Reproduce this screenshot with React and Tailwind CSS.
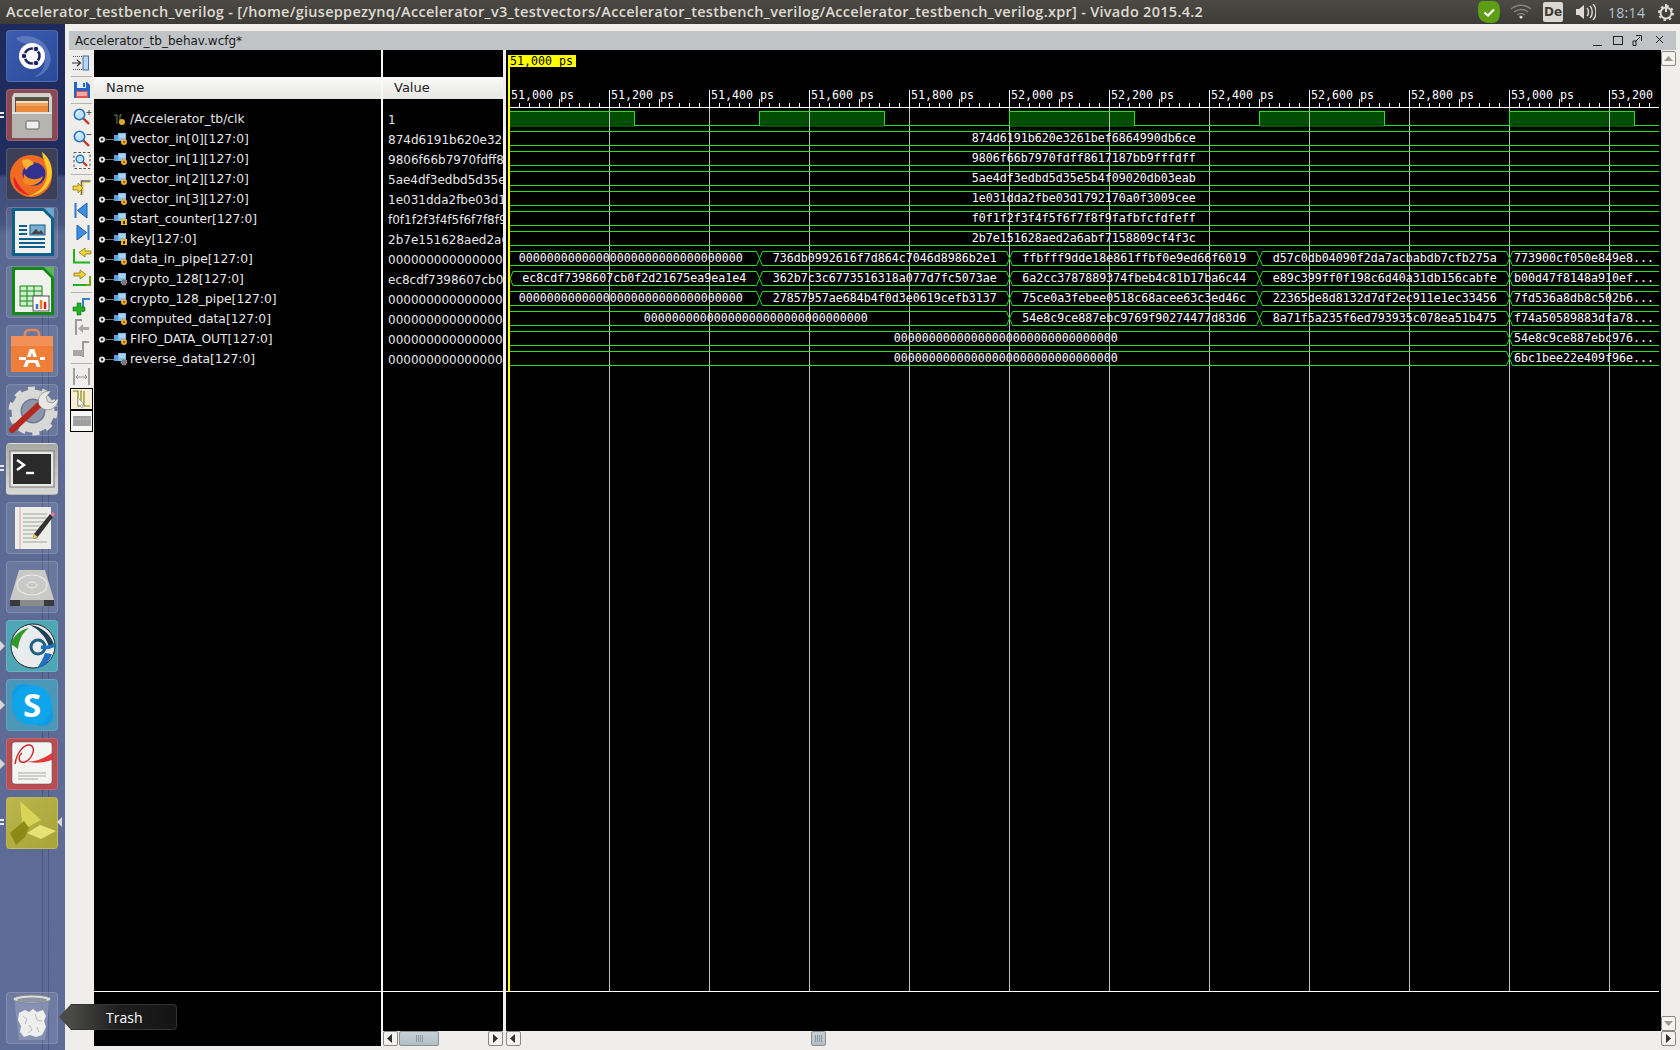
import React from "react";

const MONO = { fontFamily: '"DejaVu Sans Mono", monospace' };
const GREEN = "#22e222";
const ZERO = "00000000000000000000000000000000";
const VEC = [
  "874d6191b620e3261bef6864990db6ce",
  "9806f66b7970fdff8617187bb9fffdff",
  "5ae4df3edbd5d35e5b4f09020db03eab",
  "1e031dda2fbe03d1792170a0f3009cee",
  "f0f1f2f3f4f5f6f7f8f9fafbfcfdfeff",
  "2b7e151628aed2a6abf7158809cf4f3c",
];
const BUS = [
  { b: [759.5, 1009.5, 1259.5, 1509.5], t: [[518.7, ZERO], [772.7, "736db0992616f7d864c7046d8986b2e1"], [1022.3, "ffbfff9dde18e861ffbf0e9ed66f6019"], [1272.7, "d57c0db04090f2da7acbabdb7cfb275a"], [1514, "773900cf050e849e8..."]] },
  { open: true, b: [759.5, 1009.5, 1259.5, 1509.5], t: [[522.3, "ec8cdf7398607cb0f2d21675ea9ea1e4"], [772.7, "362b7c3c6773516318a077d7fc5073ae"], [1022.3, "6a2cc3787889374fbeb4c81b17ba6c44"], [1272.7, "e89c399ff0f198c6d40a31db156cabfe"], [1514, "b00d47f8148a910ef..."]] },
  { b: [759.5, 1009.5, 1259.5, 1509.5], t: [[518.7, ZERO], [772.7, "27857957ae684b4f0d3e0619cefb3137"], [1022.3, "75ce0a3febee0518c68acee63c3ed46c"], [1272.7, "22365de8d8132d7df2ec911e1ec33456"], [1514, "7fd536a8db8c502b6..."]] },
  { b: [1009.5, 1259.5, 1509.5], t: [[643.7, ZERO], [1022.3, "54e8c9ce887ebc9769f90274477d83d6"], [1272.7, "8a71f5a235f6ed793935c078ea51b475"], [1514, "f74a50589883dfa78..."]] },
  { b: [1509.5], t: [[893.7, ZERO], [1514, "54e8c9ce887ebc976..."]] },
  { b: [1509.5], t: [[893.7, ZERO], [1514, "6bc1bee22e409f96e..."]] },
];
const SIGNALS = [
  ["vector_in[0][127:0]", "o", VEC[0]],
  ["vector_in[1][127:0]", "o", VEC[1]],
  ["vector_in[2][127:0]", "o", VEC[2]],
  ["vector_in[3][127:0]", "o", VEC[3]],
  ["start_counter[127:0]", "y", VEC[4]],
  ["key[127:0]", "y", VEC[5]],
  ["data_in_pipe[127:0]", "o", ZERO],
  ["crypto_128[127:0]", "g", "ec8cdf7398607cb0f2d21675ea9ea1e4"],
  ["crypto_128_pipe[127:0]", "o", ZERO],
  ["computed_data[127:0]", "o", ZERO],
  ["FIFO_DATA_OUT[127:0]", "o", ZERO],
  ["reverse_data[127:0]", "g", ZERO],
];

function Wave() {
  const L = 510, R = 1659;
  const gridX = Array.from({ length: 12 }, (_, i) => 509.5 + i * 100);
  const ticks = [];
  for (let x = 509.5; x < R; x += 10) {
    const n = Math.round((x - 509.5) / 10);
    if (n % 10 === 0) continue;
    ticks.push(<line key={x} x1={x} x2={x} y1={n % 5 === 0 ? 99 : 103} y2={107} stroke="#fff" />);
  }
  const clkEdges = [510, 634.5, 759.5, 884.5, 1009.5, 1134.5, 1259.5, 1384.5, 1509.5, 1634.5, R];
  let clk = "M510 111.5";
  const hi = [];
  for (let i = 0; i < clkEdges.length - 1; i++) {
    const high = i % 2 === 0;
    const y = high ? 111.5 : 125.5;
    clk += ` L${clkEdges[i]} ${y} L${clkEdges[i + 1]} ${y}`;
    if (high) hi.push([clkEdges[i], clkEdges[i + 1]]);
  }
  return (
    <svg width="1155" height="981" viewBox="506 50 1155 981" className="block" style={MONO}>
      <rect x="506" y="50" width="1155" height="981" fill="#000" />
      {hi.map(([a, b]) => (
        <rect key={a} x={a} y="111" width={b - a} height="16" fill="#014d02" />
      ))}
      <g shapeRendering="crispEdges">
        {gridX.map((x) => (
          <g key={x}>
            <line x1={x} x2={x} y1="90" y2="107" stroke="#fff" />
            <line x1={x} x2={x} y1="107" y2="991" stroke="#bdbdbd" />
          </g>
        ))}
        {ticks}
        <line x1="509" x2={R} y1="107.5" y2="107.5" stroke="#fff" />
        <line x1="506" x2={R} y1="991.5" y2="991.5" stroke="#fff" />
        <path d={clk} fill="none" stroke={GREEN} />
        {VEC.map((_, i) => (
          <g key={i}>
            <line x1={L} x2={R} y1={131.5 + i * 20} y2={131.5 + i * 20} stroke={GREEN} />
            <line x1={L} x2={R} y1={145.5 + i * 20} y2={145.5 + i * 20} stroke={GREEN} />
          </g>
        ))}
      </g>
      {BUS.map((r, i) => {
        const t = 251.5 + i * 20, bt = t + 14, m = t + 7;
        const pts = [r.open ? 510 : null, ...r.b, null];
        const segs = [];
        for (let k = 0; k < pts.length - 1; k++) {
          const a = pts[k], b = pts[k + 1];
          let d = a == null ? `M${L} ${t}` : `M${a} ${m} L${a + 3} ${t}`;
          d += b == null ? ` L${R} ${t} M${R} ${bt}` : ` L${b - 3} ${t} L${b} ${m} L${b - 3} ${bt}`;
          d += a == null ? ` L${L} ${bt}` : ` L${a + 3} ${bt} L${a} ${m}`;
          segs.push(<path key={k} d={d} fill="none" stroke={GREEN} />);
        }
        return <g key={i}>{segs}</g>;
      })}
      <g fill="#fff" fontSize="11.63">
        {gridX.map((x, i) => {
          const v = 51000 + i * 200;
          const s = `${String(v).slice(0, 2)},${String(v).slice(2)}`;
          return (
            <text key={x} x={x + 1.5} y="99">
              {i === 11 ? "53,200" : `${s} ps`}
            </text>
          );
        })}
        {VEC.map((s, i) => (
          <text key={s} x="971.7" y={142 + i * 20}>{s}</text>
        ))}
        {BUS.map((r, i) =>
          r.t.map(([x, s]) => (
            <text key={x} x={x} y={262 + i * 20}>{s}</text>
          ))
        )}
      </g>
      <rect x="508" y="55" width="2" height="936" fill="#ffff00" />
      <rect x="508" y="55" width="68" height="12" fill="#ffff00" />
      <text x="510" y="65" fontSize="11.63" fill="#000">51,000 ps</text>
    </svg>
  );
}

function Glass({ sign }) {
  return (
    <svg width="20" height="20" viewBox="0 0 20 20">
      <line x1="11" y1="11" x2="17" y2="17" stroke="#c8361f" strokeWidth="2.4" />
      <circle cx="7.5" cy="7.5" r="5.2" fill="#bfe3fb" stroke="#2a75c9" strokeWidth="1.6" />
      <path d="M4.5 7 A3.2 3.2 0 0 1 7.5 4.2" stroke="#fff" fill="none" />
      {sign === "+" && <path d="M14.5 5.5h5M17 3v5" stroke="#555" />}
      {sign === "-" && <path d="M14.5 5.5h5" stroke="#555" />}
    </svg>
  );
}

const TOOLS = {
  enter: (
    <svg width="20" height="20" viewBox="0 0 20 20">
      <path d="M1 3.5h10M1 16.5h12" stroke="#555" strokeDasharray="1 1" />
      <path d="M0 10h8M5 7l3.5 3-3.5 3" stroke="#333" fill="none" strokeWidth="1.2" />
      <rect x="11" y="3" width="5.5" height="14" fill="#b9d4ee" stroke="#3a73b0" />
    </svg>
  ),
  save: (
    <svg width="18" height="18" viewBox="0 0 18 18">
      <path d="M1 1h13l3 3v13H1z" fill="#1f66c7" />
      <rect x="4" y="1" width="9" height="6" fill="#e8eef5" />
      <rect x="10" y="2" width="2" height="4" fill="#1f66c7" />
      <rect x="3" y="10" width="12" height="7" fill="#e4504a" />
      <path d="M4 12h10M4 14h10" stroke="#fff" />
    </svg>
  ),
  zin: <Glass sign="+" />,
  zout: <Glass sign="-" />,
  zfit: (
    <svg width="20" height="20" viewBox="0 0 20 20">
      <rect x="2" y="1.5" width="16" height="16" fill="none" stroke="#555" strokeDasharray="2.5 2" />
      <line x1="10" y1="10" x2="15" y2="15" stroke="#c8361f" strokeWidth="2.2" />
      <circle cx="8" cy="8" r="3.8" fill="#bfe3fb" stroke="#2a75c9" strokeWidth="1.4" />
    </svg>
  ),
  gofirst: (
    <svg width="20" height="20" viewBox="0 0 20 20">
      <path d="M9.500 17V3h9" fill="none" stroke="#6a6a50" strokeWidth="1.6" />
      <path d="M11 17V4.500h7" fill="none" stroke="#e6c83c" strokeWidth="1" />
      <path d="M1 8h5V5l5 5-5 5v-3H1z" fill="#f2d33e" stroke="#8f7b1d" strokeWidth=".8" />
    </svg>
  ),
  prev: (
    <svg width="20" height="20" viewBox="0 0 20 20">
      <rect x="2.5" y="2" width="2" height="15" fill="#2f7bd0" />
      <path d="M15 2v15L5.5 9.5z" fill="#3c8fe4" stroke="#1f5ea8" />
    </svg>
  ),
  next: (
    <svg width="20" height="20" viewBox="0 0 20 20">
      <rect x="15.5" y="2" width="2" height="15" fill="#2f7bd0" />
      <path d="M5 2v15l9.5-7.500z" fill="#3c8fe4" stroke="#1f5ea8" />
    </svg>
  ),
  gleft: (
    <svg width="20" height="20" viewBox="0 0 20 20">
      <path d="M2 3v13.500h16" fill="none" stroke="#1db31d" strokeWidth="2" />
      <path d="M19 5h-6V2L7 6.500 13 11V8h6z" fill="#f2d33e" stroke="#8f7b1d" strokeWidth=".8" />
    </svg>
  ),
  gright: (
    <svg width="20" height="20" viewBox="0 0 20 20">
      <path d="M18 8v9H3" fill="none" stroke="#7fa21a" strokeWidth="2" />
      <path d="M1 17h13" stroke="#1db31d" strokeWidth="2" />
      <path d="M2 5h6V2l6 4.500L8 11V8H2z" fill="#f2d33e" stroke="#8f7b1d" strokeWidth=".8" />
    </svg>
  ),
  addmark: (
    <svg width="20" height="20" viewBox="0 0 20 20">
      <path d="M11 16V3h7" fill="none" stroke="#3b80cc" strokeWidth="2" />
      <path d="M1 11h4V7h4v4h4v4H9v4H5v-4H1z" fill="#22b322" stroke="#127012" strokeWidth=".6" />
    </svg>
  ),
  back: (
    <svg width="20" height="20" viewBox="0 0 20 20">
      <path d="M4 17V2h6" fill="none" stroke="#9a9a9a" strokeWidth="2" />
      <path d="M17 9h-6V6l-5 4.500 5 4.500v-3h6z" fill="#a8a8a8" />
    </svg>
  ),
  fwd: (
    <svg width="20" height="20" viewBox="0 0 20 20">
      <path d="M11 17V2h6" fill="none" stroke="#9a9a9a" strokeWidth="2" />
      <rect x="1" y="10" width="10" height="6" fill="#a8a8a8" />
    </svg>
  ),
  swap: (
    <svg width="20" height="20" viewBox="0 0 20 20">
      <path d="M2 1v17M17 1v17" stroke="#a0a0a0" strokeWidth="2" />
      <path d="M4 10h11M6 8l-2 2 2 2M13 8l2 2-2 2" stroke="#909090" fill="none" />
    </svg>
  ),
  cursor: (
    <svg width="20" height="20" viewBox="0 0 20 20">
      <path d="M1 2h5v15h3V2h1M12 2v15h6" fill="none" stroke="#7d8a1f" strokeWidth="1.2" />
      <path d="M6 9l6 6-2.500.3 1.500 3-1.400.7-1.500-3L6 17z" fill="#fff" stroke="#888" strokeWidth=".6" />
    </svg>
  ),
  bar: (
    <svg width="18" height="10" viewBox="0 0 18 10">
      <rect width="18" height="10" fill="#a3a3a3" />
      <path d="M3 0v10M6 0v10M9 0v10M12 0v10M15 0v10" stroke="#9a9a9a" />
      <path d="M0 3h18" stroke="#b4b4b4" />
    </svg>
  ),
};

function Tool({ k, sel, bg, wide }) {
  return (
    <div className={`flex items-center justify-center w-[23px] shrink-0 ${wide ? "h-[22.5px]" : "h-[22px]"} ${sel ? "border border-black " + bg : ""}`}>
      {TOOLS[k]}
    </div>
  );
}
const Sep = () => <div className="h-px w-[21px] bg-[#b5b5b0] my-[2px] shrink-0" />;

function Toolbar() {
  return (
    <div className="w-[25px] flex flex-col items-center pt-[2px] shrink-0">
      <Tool k="enter" />
      <Sep />
      <Tool k="save" />
      <Sep />
      <Tool k="zin" />
      <Tool k="zout" />
      <Tool k="zfit" />
      <Sep />
      <Tool k="gofirst" wide />
      <Tool k="prev" wide />
      <Tool k="next" wide />
      <Tool k="gleft" wide />
      <Tool k="gright" wide />
      <Sep />
      <Tool k="addmark" />
      <Tool k="back" />
      <Tool k="fwd" />
      <Sep />
      <Tool k="swap" />
      <Tool k="cursor" sel bg="bg-[#fbeed6]" />
      <Tool k="bar" sel bg="bg-[#f6f6f4]" />
    </div>
  );
}

function TreeIcon({ t }) {
  const lock =
    t === "y" ? (
      <g>
        <rect x="7" y="6" width="6" height="6" fill="#f1b91d" />
        <rect x="9" y="8" width="2" height="3" fill="#333" />
      </g>
    ) : t === "g" ? (
      <circle cx="10" cy="9" r="3" fill="#777" stroke="#ccc" strokeDasharray="1 1" />
    ) : (
      <g>
        <circle cx="10" cy="9" r="3" fill="#eda92b" />
        <circle cx="10" cy="9" r="1" fill="#7a5610" />
      </g>
    );
  return (
    <svg width="13" height="13" viewBox="0 0 13 13" className="shrink-0">
      <rect x="0" y="2" width="9" height="6" fill="#5a9fdc" />
      <rect x="4" y="0" width="8" height="8" fill="#7dbcef" />
      <path d="M5 2h6M5 4h6" stroke="#d5eafa" />
      {lock}
    </svg>
  );
}

function NameRow({ name, t }) {
  return (
    <div className="h-5 flex items-center text-[12.3px] text-[#e8e8e8]">
      <svg width="16" height="9" viewBox="0 0 16 9" className="ml-[4px] shrink-0">
        <circle cx="4" cy="4.5" r="2.2" fill="#222" stroke="#e6e6e6" strokeWidth="1.8" />
        <line x1="7" x2="16" y1="4.5" y2="4.5" stroke="#777" />
      </svg>
      <TreeIcon t={t} />
      <span className="ml-[3px] whitespace-nowrap">{name}</span>
    </div>
  );
}

function ColHead({ children, cls }) {
  return (
    <div className={`h-[22px] flex items-center text-[13px] text-[#222] bg-[linear-gradient(180deg,#fafaf9,#e6e6e3)] ${cls}`}>
      {children}
    </div>
  );
}

function Btn({ dir, cls = "" }) {
  const d = { l: "M9 3v9L4 7.5z", r: "M5 3v9l5-4.5z", u: "M3 10h9L7.5 5z", d: "M3 5h9l-4.5 5z" }[dir];
  const fill = dir === "u" || dir === "d" ? "#9a9a94" : "#333";
  return (
    <div className={`w-[15px] h-[15px] shrink-0 border border-[#8a8a84] rounded-[2px] bg-[#f4f3f0] flex items-center justify-center ${cls}`}>
      <svg width="15" height="15" viewBox="0 0 15 15" className="shrink-0"><path d={d} fill={fill} /></svg>
    </div>
  );
}

function Thumb({ cls }) {
  return (
    <div className={`h-[15px] border border-[#8a8f93] rounded-[2px] bg-[linear-gradient(180deg,#c7d0d6,#b2bec6)] flex items-center justify-center gap-px ${cls}`}>
      {[0, 1, 2, 3].map((i) => (
        <div key={i} className="w-px h-[7px] bg-[#8b979f]" />
      ))}
    </div>
  );
}

function Tile({ bg, children }) {
  return (
    <div className={`relative w-[52px] h-[52px] rounded-[4px] shrink-0 border border-white/15 ${bg}`}>
      <svg width="52" height="52" viewBox="0 0 52 52" className="absolute left-[-1px] top-[-1px]">
        {children}
      </svg>
    </div>
  );
}

const Launcher = [
  <Tile key="u" bg="bg-[linear-gradient(135deg,#3d5cae,#2a4a9a)]">
    <path d="M10 8c14-6 30 2 34 16 3 12-6 22-16 23 14-6 14-24 2-30C22 13 14 14 10 8z" fill="#7f97d0" opacity=".5" />
    <circle cx="26" cy="26" r="13" fill="#fff" />
    <circle cx="26" cy="26" r="7.5" fill="none" stroke="#1e2460" strokeWidth="2.6" />
    <circle cx="18" cy="26" r="2.8" fill="#1e2460" stroke="#fff" />
    <circle cx="30" cy="19" r="2.8" fill="#1e2460" stroke="#fff" />
    <circle cx="30" cy="33" r="2.8" fill="#1e2460" stroke="#fff" />
  </Tile>,
  <Tile key="f" bg="bg-[#8a4a55]">
    <path d="M8 4h36l2 4v41H6V8z" fill="#d2d1cc" />
    <rect x="9" y="8" width="34" height="15" fill="#55514d" />
    <rect x="10" y="12" width="32" height="2" fill="#f7dcb6" />
    <rect x="10" y="14" width="32" height="3" fill="#f0a55b" />
    <rect x="10" y="17" width="32" height="6" fill="#e8893c" />
    <path d="M6 23h40v26H6z" fill="#b5b4af" />
    <path d="M6 23h40v2H6z" fill="#e4e3de" />
    <rect x="20" y="32" width="13" height="8" rx="1" fill="#eee" stroke="#666" />
  </Tile>,
  <Tile key="ff" bg="bg-[#3b3f58]">
    <circle cx="25" cy="28" r="21" fill="#f06a21" />
    <path d="M36 4c12 9 13 26 4 36-6 6-12 8-18 8 10-3 19-10 19-22 0-8-4-14-5-22z" fill="#ffc72c" />
    <circle cx="28" cy="26" r="11.5" fill="#33308f" />
    <path d="M18 26c4 6 13 7 19 2-2 9-14 12-20 6z" fill="#f58a1f" />
    <path d="M16 12c6-2 10 0 12 4-3 1-6 3-8 6-2-3-4-6-4-10z" fill="#f9b233" />
    <path d="M8 28c-2 9 5 18 16 19-6-3-12-9-16-19z" fill="#e1262b" />
  </Tile>,
  <Tile key="w" bg="bg-white/10">
    <path d="M6 1h32l10 10v38H6z" fill="#0d5f8c" />
    <path d="M9 4h28l8 8v34H9z" fill="#f1f1ee" />
    <path d="M38 1h10v10z" fill="#6aa7cf" />
    <rect x="24" y="18" width="15" height="10" fill="#7aaed2" stroke="#0d5f8c" />
    <path d="M25 27l5-5 3 3 2-2 3 4z" fill="#444" />
    <path d="M13 19h8M13 23h8M13 27h8M13 32h26M13 36h26M13 40h26" stroke="#0d5f8c" strokeWidth="2" />
  </Tile>,
  <Tile key="c" bg="bg-white/10">
    <path d="M6 1h32l10 10v38H6z" fill="#138a13" />
    <path d="M9 4h28l8 8v34H9z" fill="#f1f1ee" />
    <path d="M38 1h10v10z" fill="#58b858" />
    <path d="M14 20h22v20H14zM14 25h22M14 30h22M14 35h22M21 20v20M28 20v20" fill="#cfeccf" stroke="#138a13" />
    <rect x="27" y="30" width="16" height="15" fill="#fafafa" stroke="#555" />
    <path d="M31 43v-5" stroke="#3a73d8" strokeWidth="2.5" />
    <path d="M35 43v-9" stroke="#e8821e" strokeWidth="2.5" />
    <path d="M39 43v-7" stroke="#d22" strokeWidth="2.5" />
  </Tile>,
  <Tile key="s" bg="bg-white/10">
    <path d="M19 13v-4a4 4 0 0 1 4-4h6a4 4 0 0 1 4 4v4" fill="none" stroke="#e48855" strokeWidth="2.5" />
    <path d="M5 11h42v36H5z" fill="#ee7e38" />
    <path d="M5 11h42v10H5z" fill="#f29058" />
    <text x="26" y="42" textAnchor="middle" fontSize="25" fontWeight="700" fill="#fff" style={{ fontFamily: '"Liberation Sans", sans-serif' }}>A</text>
    <rect x="13" y="32" width="26" height="3" fill="#fff" />
    <rect x="20" y="32" width="14" height="3" fill="#ee7e38" />
  </Tile>,
  <Tile key="st" bg="bg-white/10">
    <circle cx="27" cy="27" r="17" fill="none" stroke="#d8d8d6" strokeWidth="9" />
    <circle cx="27" cy="27" r="22" fill="none" stroke="#d8d8d6" strokeWidth="5" strokeDasharray="7 7" />
    <circle cx="27" cy="27" r="11" fill="#8f95a8" />
    <path d="M6 46L33 21" stroke="#b5281f" strokeWidth="6" strokeLinecap="round" />
    <path d="M33 21c-3-8 4-15 12-14l-5 6 2 5 5 1 5-5c1 8-7 14-15 11z" fill="#e7e7e5" stroke="#777" strokeWidth=".6" />
  </Tile>,
  <Tile key="t" bg="bg-[linear-gradient(180deg,#a8a8a4,#d8d8d4)]">
    <rect x="4" y="8" width="44" height="36" fill="#e8e8e4" stroke="#777" />
    <rect x="7" y="11" width="38" height="30" fill="#2b2b2b" />
    <path d="M11 17l7 5-7 5" fill="none" stroke="#fff" strokeWidth="2.4" />
    <path d="M20 30h8" stroke="#fff" strokeWidth="2.4" />
  </Tile>,
  <Tile key="e" bg="bg-white/10">
    <rect x="9" y="5" width="36" height="42" fill="#ededea" />
    <path d="M14 5v42" stroke="#e9a0a0" />
    <path d="M17 12h24M17 16h24M17 20h24M17 24h20M17 28h14M17 32h12M17 36h10M17 40h24" stroke="#9a9a9a" strokeWidth=".9" />
    <path d="M47 15L31 36l-4 1 1-5L44 12z" fill="#333" />
    <path d="M44 12l3 3 2-3-2-2z" fill="#e87ba0" />
    <path d="M27 37l1-5 4 3z" fill="#ecc94b" />
  </Tile>,
  <Tile key="d" bg="bg-white/10">
    <path d="M13 9h26l9 30v6H4v-6z" fill="#c9c9c7" />
    <ellipse cx="26" cy="24" rx="15" ry="10" fill="none" stroke="#eaeaea" strokeWidth="1.2" />
    <ellipse cx="26" cy="24" rx="5" ry="3" fill="none" stroke="#eee" />
    <path d="M4 39h44v6H4z" fill="#3a3a3a" />
    <path d="M14 39h24v6H14z" fill="#8a8a8a" />
  </Tile>,
  <Tile key="a" bg="bg-[#4fa6b5]">
    <circle cx="27" cy="26" r="22" fill="#e9eced" />
    <circle cx="27" cy="26" r="22" fill="none" stroke="#262626" strokeWidth="1" />
    <path d="M5 24c2-8 10-15 18-16-7 5-10 12-11 21z" fill="#2f9a2a" />
    <path d="M24 5c12 1 22 11 24 20l-5 2C40 16 32 9 24 5z" fill="#1f3f55" />
    <circle cx="32" cy="27" r="7" fill="none" stroke="#1c5f85" strokeWidth="3" />
    <path d="M49 25c-4 2-10 3-14 2" stroke="#1f6fc2" strokeWidth="3.5" fill="none" />
    <path d="M31 48c8-1 13-8 15-14l-7-1c-2 6-5 11-8 15z" fill="#1f6fc2" />
  </Tile>,
  <Tile key="sk" bg="bg-[#4b97b8]">
    <circle cx="17" cy="16" r="11" fill="#0e9ce6" />
    <circle cx="36" cy="36" r="11" fill="#0e9ce6" />
    <circle cx="26" cy="26" r="20" fill="#0fa5ea" />
    <text x="26" y="38" textAnchor="middle" fontSize="33" fontWeight="700" fill="#fff" style={{ fontFamily: '"Open Sans", sans-serif' }}>S</text>
  </Tile>,
  <Tile key="ev" bg="bg-[#b84d52]">
    <rect x="6" y="4" width="40" height="42" rx="3" fill="#f4f4f2" stroke="#555" strokeWidth=".5" />
    <path d="M9 26c2-12 9-20 15-19 7 2 2 14-5 17-6 2-8-5-3-9" fill="none" stroke="#cc2a2a" strokeWidth="1.5" />
    <path d="M17 22c8 4 20-1 29-7v7c-9 3-20 4-29 0z" fill="#e23a3a" />
    <path d="M12 35h28M12 38h28M12 41h20" stroke="#a8a8a8" />
  </Tile>,
  <Tile key="v" bg="bg-[linear-gradient(135deg,#bcb64c,#a8a438)]">
    <path d="M14 4l21 19-13 7-6-4z" fill="#d9d356" />
    <path d="M4 36l14-12 5 7-4 9-9 8z" fill="#8f8a16" />
    <path d="M21 36l13-8 16 6-15 8z" fill="#e7e372" />
  </Tile>,
];

function Trash() {
  return (
    <Tile bg="bg-white/10">
      <path d="M8 6h36l-5 42H13z" fill="#aab3cc" opacity=".4" />
      <ellipse cx="26" cy="7" rx="19" ry="4" fill="#dcdcdc" stroke="#888" />
      <ellipse cx="26" cy="8" rx="15" ry="2.5" fill="#8e94a6" />
      <path d="M13 21l6-3 4 2 4-3 4 3 6-2 3 6-2 5 2 6-4 8-6 2-6-2-6 2-4-5 1-6-3-6z" fill="#eee" />
      <path d="M17 24l4 3-2 5M29 22l2 6 5 1M23 33l3 5-4 3M31 35l2 5" stroke="#bbb" fill="none" />
    </Tile>
  );
}

const Pip = ({ y, two }) =>
  two ? (
    <div className="absolute left-0 w-[4px] flex flex-col gap-[2px]" style={{ top: y - 3 }}>
      <div className="h-[2px] bg-[#e8e8e8]" />
      <div className="h-[2px] bg-[#e8e8e8]" />
    </div>
  ) : (
    <div className="absolute left-0 w-0 h-0 border-y-[5px] border-y-transparent border-l-[5px] border-l-[#d8d8d8]" style={{ top: y - 5 }} />
  );

export default function App() {
  return (
    <div className="w-[1680px] h-[1050px] flex flex-col overflow-hidden bg-[#efeeea]" style={{ fontFamily: '"DejaVu Sans", sans-serif' }}>
      {/* Top panel */}
      <div className="h-6 shrink-0 flex items-center bg-[linear-gradient(180deg,#4b4a44,#3c3b37)] text-[#dfdbd2]" style={{ fontFamily: '"Open Sans", sans-serif' }}>
        <div className="pl-[6px] text-[14.5px] font-semibold whitespace-nowrap flex-1 tracking-[0.29px]">
          Accelerator_testbench_verilog - [/home/giuseppezynq/Accelerator_v3_testvectors/Accelerator_testbench_verilog/Accelerator_testbench_verilog.xpr] - Vivado 2015.4.2
        </div>
        <div className="flex items-center w-[205px] shrink-0 pl-[2px]">
          <svg width="24" height="24" viewBox="0 0 24 24" className="shrink-0">
            <path d="M5 1h11c5 0 7 4 7 10s-1 12-8 12C9 23 1 22 1 12 1 6 1 2 5 1z" fill="#5d9e14" />
            <path d="M7.5 12.5l3.5 3 6-6" fill="none" stroke="#fff" strokeWidth="2.2" />
          </svg>
          <svg width="22" height="16" viewBox="0 0 22 16" className="ml-[9px] shrink-0">
            <path d="M1 5c6-5 14-5 20 0M4 8c4-3.5 10-3.5 14 0M7 11c2.5-2 5.500-2 8 0" fill="none" stroke="#85847f" strokeWidth="1.5" />
            <path d="M9 13l2-1.500 2 1.500-2 2z" fill="#dfdbd2" />
          </svg>
          <div className="ml-[11px] w-[20px] h-[20px] rounded-[2px] bg-[#dcd8cf] text-[#3c3b37] text-[12px] font-semibold flex items-center justify-center" style={{ fontFamily: '"DejaVu Sans", sans-serif' }}>De</div>
          <svg width="21" height="16" viewBox="0 0 21 16" className="ml-[12px] shrink-0">
            <path d="M1 5h3l5-4v14l-5-4H1z" fill="#dfdbd2" />
            <path d="M12 4c2 2 2 6 0 8M15 2c3 3 3 9 0 12M18 0c4 4 4 12 0 16" fill="none" stroke="#dfdbd2" strokeWidth="1.400" />
          </svg>
          <span className="ml-[12px] text-[14px] text-[#b7c4d0] tracking-[0.3px]">18:14</span>
          <svg width="18" height="18" viewBox="0 0 18 18" className="ml-[12px] shrink-0">
            <circle cx="9" cy="10" r="5.500" fill="none" stroke="#dfdbd2" strokeWidth="2" />
            <circle cx="9" cy="10" r="7" fill="none" stroke="#dfdbd2" strokeWidth="2" strokeDasharray="2.500 3" />
            <path d="M9 1v8" stroke="#dfdbd2" strokeWidth="2" />
          </svg>
        </div>
      </div>

      <div className="flex-1 flex min-h-0">
        {/* Launcher */}
        <div className="relative w-[65px] shrink-0 flex flex-col items-start pl-[6px] pt-[6px] pb-[6px] gap-[7px] bg-[linear-gradient(180deg,#1c2a5c_0,#1f2d60_150px,#3f4d7c_153px,#46547f_200px,#5a6891_210px,#5e6c98_100%)]">
          <div className="absolute left-[42px] top-[245px] bottom-0 w-px bg-[#4a5883]" />
          <div className="absolute left-[48px] top-[245px] bottom-0 w-px bg-[#4a5883]" />
          <div className="flex flex-col gap-[7px] items-center">{Launcher}</div>
          <div className="mt-auto"><Trash /></div>
          <Pip y={91} two />
          <Pip y={444} two />
          <Pip y={622} />
          <Pip y={681} />
          <Pip y={740} />
          <Pip y={798} two />
          <div className="absolute right-[3px] top-[793px] w-0 h-0 border-y-[5px] border-y-transparent border-r-[5px] border-r-[#d8d8d8]" />
          <div className="absolute left-[59px] top-[980px] h-[26px] w-[118px] flex items-center z-10">
            <div className="w-0 h-0 border-y-[13px] border-y-transparent border-r-[12px] border-r-[#4a4a47]" />
            <div className="flex-1 h-[26px] rounded-r-[4px] border border-l-0 border-[#333] bg-[linear-gradient(90deg,#4a4a47,#1e1e1e_45%,#141414)] flex items-center pl-[35px] text-[14px] text-white" style={{ fontFamily: '"Open Sans", sans-serif' }}>Trash</div>
          </div>
        </div>

        {/* Window */}
        <div className="flex-1 min-w-0 flex flex-col pt-[7px] pl-[4px] pr-[4px] pb-[4px]">
          <div className="h-[19px] shrink-0 bg-[#c0c4c6] flex items-center text-[12px] text-[#1a1a1a] pl-[6px] pr-[10px]">
            <span className="flex-1">Accelerator_tb_behav.wcfg*</span>
            <svg width="80" height="16" viewBox="0 0 80 16" className="shrink-0">
              <path d="M7 12.500h9" stroke="#222" />
              <rect x="27.500" y="3.500" width="9" height="8" fill="none" stroke="#222" />
              <path d="M50 2.500h5.500V8M50 12.500h-3V8h3z M49 9l5-5" fill="none" stroke="#222" />
              <path d="M70 3l7 7M77 3l-7 7" stroke="#222" />
            </svg>
          </div>
          <div className="flex-1 min-h-0 flex">
            <Toolbar />
            {/* Name column */}
            <div className="w-[287px] shrink-0 bg-black flex flex-col">
              <div className="h-[27px] shrink-0" />
              <ColHead cls="pl-[12px]">Name</ColHead>
              <div className="flex-1 pt-[10px]">
                <div className="h-5 flex items-center text-[12.3px] text-[#e8e8e8] pl-[19px]">
                  <svg width="13" height="13" viewBox="0 0 13 13" className="shrink-0 mr-[4px]">
                    <path d="M1 2h3v9M7 11V2h2" fill="none" stroke="#6f8a52" />
                    <circle cx="9" cy="9" r="3" fill="#dda52a" />
                  </svg>
                  <span>/Accelerator_tb/clk</span>
                </div>
                {SIGNALS.map(([n, t]) => (
                  <NameRow key={n} name={n} t={t} />
                ))}
              </div>
              <div className="h-px bg-white shrink-0" />
              <div className="h-[54px] shrink-0" />
            </div>
            <div className="w-[2px] shrink-0 bg-[#f7f7f5]" />
            {/* Value column */}
            <div className="w-[120px] shrink-0 flex flex-col">
              <div className="h-[27px] shrink-0 bg-black" />
              <ColHead cls="pl-[11px]">Value</ColHead>
              <div className="flex-1 bg-black pt-[11px] pl-[5px] overflow-hidden">
                {["1", ...SIGNALS.map((s) => s[2])].map((v, i) => (
                  <div key={i} className="h-5 flex items-center text-[12px] text-[#e8e8e8] whitespace-nowrap">{v}</div>
                ))}
              </div>
              <div className="h-px bg-white shrink-0" />
              <div className="h-[39px] bg-black shrink-0" />
              <div className="h-[15px] shrink-0 flex">
                <Btn dir="l" />
                <Thumb cls="w-[40px] ml-px" />
                <div className="flex-1" />
                <Btn dir="r" />
              </div>
            </div>
            <div className="w-[3px] shrink-0" />
            {/* Wave column */}
            <div className="w-[1155px] shrink-0 flex flex-col">
              <Wave />
              <div className="h-[15px] flex shrink-0">
                <Btn dir="l" />
                <div className="w-[290px]" />
                <Thumb cls="w-[15px]" />
              </div>
            </div>
            {/* Vertical scrollbar */}
            <div className="w-[15px] shrink-0 flex flex-col">
              <div className="h-px" />
              <Btn dir="u" />
              <div className="flex-1" />
              <Btn dir="d" />
              <Btn dir="r" />
            </div>
          </div>
        </div>
      </div>
    </div>
  );
}
